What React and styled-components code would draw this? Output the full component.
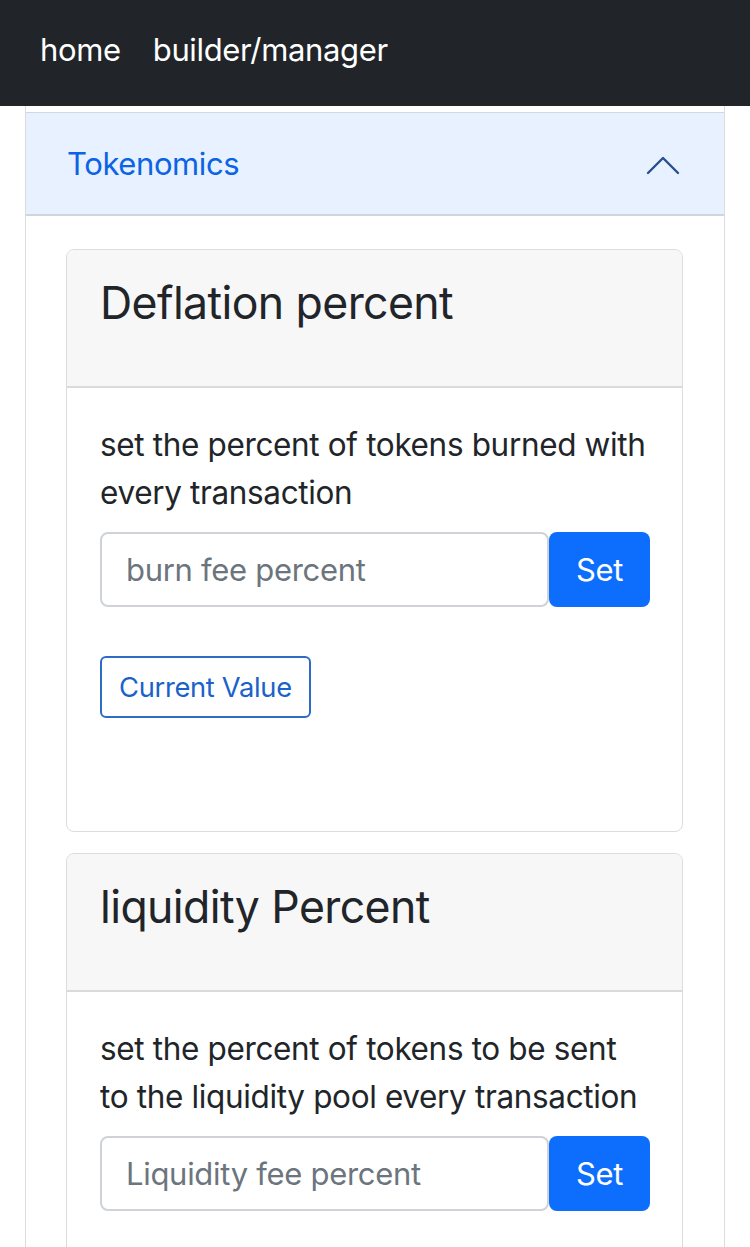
import styled, { createGlobalStyle } from "styled-components";

const GlobalStyle = createGlobalStyle`
  html, body {
    margin: 0;
    padding: 0;
    background: #ffffff;
  }
  body {
    font-family: Inter, "Noto Sans", sans-serif;
    color: #212529;
    -webkit-font-smoothing: antialiased;
  }
  * {
    box-sizing: border-box;
  }
`;

const Page = styled.div`
  width: 750px;
  height: 1247px;
  overflow: hidden;
`;

const Navbar = styled.nav`
  height: 106px;
  background: #212529;
  display: flex;
  align-items: center;
  gap: 32px;
  padding: 0 40px 8px;
`;

const NavLink = styled.a`
  color: #ffffff;
  font-size: 31px;
  letter-spacing: -0.35px;
  text-decoration: none;
`;

const Accordion = styled.div`
  margin: 0 25px;
  padding-top: 6px;
  border-left: 1px solid #dcdcdc;
  border-right: 1px solid #dcdcdc;
`;

const AccordionItem = styled.div`
  border-top: 1px solid #d4d7db;
`;

const AccordionButton = styled.button`
  width: 100%;
  height: 103px;
  display: flex;
  align-items: center;
  justify-content: space-between;
  padding: 0 44px 0 41px;
  background: #e7f1ff;
  border: none;
  border-bottom: 2px solid #cfd5dd;
  color: #0c63e4;
  font-family: inherit;
  font-size: 31px;
  letter-spacing: -0.4px;
  text-align: left;
`;

const Chevron = styled.svg`
  width: 34px;
  height: 22px;
  margin-top: 2px;
`;

const AccordionBody = styled.div`
  padding: 33px 41px 0 40px;
  display: flex;
  flex-direction: column;
  gap: 21px;
`;

const Card = styled.div`
  border: 1.5px solid #dcdcdc;
  border-radius: 8px;
  background: #fff;
  overflow: hidden;
  min-height: 583px;
`;

const CardHeader = styled.div`
  height: 138px;
  background: #f7f7f7;
  border-bottom: 2px solid #dadada;
  padding: 24px 33px 0;
`;

const CardTitle = styled.h4`
  margin: 0;
  font-size: 44.6px;
  font-weight: 400;
  line-height: 58px;
  letter-spacing: -0.6px;
  color: #212529;
`;

const CardBody = styled.div`
  padding: 33px 32px 32px 33px;
`;

const Text = styled.p`
  margin: 0 0 15px;
  font-size: 31.5px;
  line-height: 48px;
  letter-spacing: -0.35px;
  color: #212529;
`;

const InputGroup = styled.div`
  display: flex;
  width: 550px;
  height: 75px;
`;

const Input = styled.input`
  flex: 1;
  min-width: 0;
  height: 100%;
  border: 2px solid #cfd3d7;
  border-radius: 8px;
  padding: 0 24px;
  font-family: inherit;
  font-size: 31px;
  letter-spacing: -0.3px;
  color: #212529;
  outline: none;

  &::placeholder {
    color: #6c757d;
  }
`;

const SetButton = styled.button`
  width: 101px;
  height: 100%;
  border: none;
  border-radius: 8px;
  background: #0d6efd;
  color: #ffffff;
  font-family: inherit;
  font-size: 31px;
  letter-spacing: -0.35px;
`;

const OutlineButton = styled.button`
  margin-top: 49px;
  height: 62px;
  padding: 0 17px;
  border: 2px solid #2c6bc7;
  border-radius: 6px;
  background: #fff;
  color: #1a62c9;
  font-family: inherit;
  font-size: 27.3px;
  letter-spacing: -0.3px;
`;

const sections = [
  {
    title: "Deflation percent",
    text: "set the percent of tokens burned with every transaction",
    placeholder: "burn fee percent",
    showCurrent: true,
  },
  {
    title: "liquidity Percent",
    text: "set the percent of tokens to be sent to the liquidity pool every transaction",
    placeholder: "Liquidity fee percent",
    showCurrent: false,
  },
];

function App() {
  return (
    <Page>
      <GlobalStyle />
      <Navbar>
        <NavLink href="#">home</NavLink>
        <NavLink href="#">builder/manager</NavLink>
      </Navbar>
      <Accordion>
        <AccordionItem>
          <AccordionButton>
            Tokenomics
            <Chevron viewBox="0 0 34 22">
              <polyline
                points="2,19 17,4 32,19"
                fill="none"
                stroke="#27508f"
                strokeWidth="2.4"
                strokeLinecap="round"
                strokeLinejoin="round"
              />
            </Chevron>
          </AccordionButton>
          <AccordionBody>
            {sections.map(s => (
              <Card key={s.title}>
                <CardHeader>
                  <CardTitle>{s.title}</CardTitle>
                </CardHeader>
                <CardBody>
                  <Text>{s.text}</Text>
                  <InputGroup>
                    <Input placeholder={s.placeholder} />
                    <SetButton>Set</SetButton>
                  </InputGroup>
                  {s.showCurrent && <OutlineButton>Current Value</OutlineButton>}
                </CardBody>
              </Card>
            ))}
          </AccordionBody>
        </AccordionItem>
      </Accordion>
    </Page>
  );
}

export default App;
